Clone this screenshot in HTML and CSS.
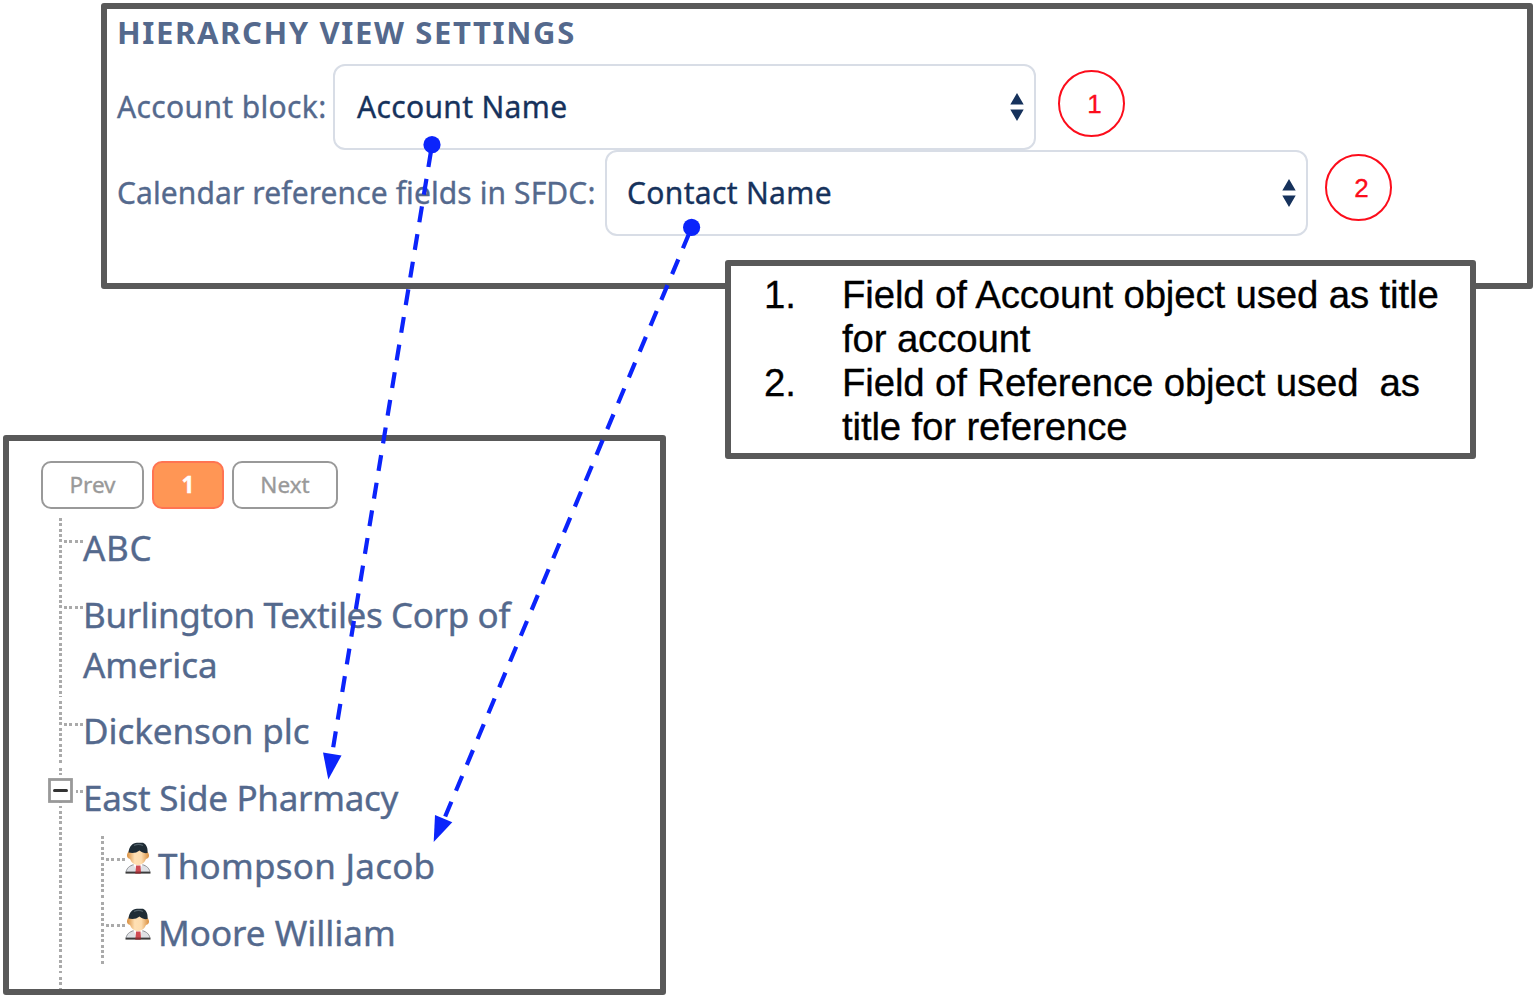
FILE: index.html
```html
<!DOCTYPE html>
<html lang="en">
<head>
<meta charset="utf-8">
<title>Hierarchy view settings</title>
<link rel="stylesheet" href="styles.css">
</head>
<body>
<main class="sheet">
  <section class="panel settings">
    <h1 class="heading">HIERARCHY VIEW SETTINGS</h1>
    <div class="field">
      <span class="label label-account">Account block:</span>
      <div class="select">
        <span class="value">Account Name</span>
        <svg class="sorter" width="14" height="28" viewBox="0 0 14 28"><path d="M7 0l6.7 11.500H.3zM7 28L.3 16.500h13.400z"/></svg>
      </div>
      <span class="badge badge-one">1</span>
    </div>
    <div class="field">
      <span class="label label-calendar">Calendar reference fields in SFDC:</span>
      <div class="select select-contact">
        <span class="value">Contact Name</span>
        <svg class="sorter" width="14" height="28" viewBox="0 0 14 28"><path d="M7 0l6.7 11.500H.3zM7 28L.3 16.500h13.400z"/></svg>
      </div>
      <span class="badge badge-two">2</span>
    </div>
  </section>

  <section class="panel hierarchy">
    <nav class="pager">
      <span class="page page-prev">Prev</span>
      <span class="page page-current">1</span>
      <span class="page page-next">Next</span>
    </nav>
    <ul class="tree">
      <li class="node"><span class="name name-wide">ABC</span></li>
      <li class="node"><span class="name"><span class="name-tight">Burlington Textiles Corp of</span><br>America</span></li>
      <li class="node"><span class="name name-plain">Dickenson plc</span></li>
      <li class="node node-open">
        <svg class="toggle" width="25" height="25" viewBox="0 0 25 25"><rect x="1.500" y="1.500" width="22" height="22" fill="#fff" stroke="#999" stroke-width="2.800"/><path d="M6.500 12.500h12" stroke="#333" stroke-width="3" stroke-linecap="round"/></svg>
        <span class="name name-snug">East Side Pharmacy</span>
        <ul class="branch">
          <li class="node leaf">
            <svg class="person" width="26" height="32" viewBox="0 0 26 32"><use href="#person"/></svg>
            <span class="name name-loose">Thompson Jacob</span>
          </li>
          <li class="node leaf">
            <svg class="person" width="26" height="32" viewBox="0 0 26 32"><use href="#person"/></svg>
            <span class="name">Moore William</span>
          </li>
        </ul>
      </li>
      <li class="node node-cut"></li>
    </ul>
  </section>

  <aside class="panel callout">
    <ol class="notes">
      <li class="note"><span class="num">1.</span><span>Field of Account object used as title<br>for account</span></li>
      <li class="note"><span class="num">2.</span><span>Field of Reference object used&nbsp; as<br>title for reference</span></li>
    </ol>
  </aside>

  <svg class="arrows" width="1536" height="998" viewBox="0 0 1536 998">
    <defs>
      <linearGradient id="skin" x1="0" x2="1"><stop offset="0" stop-color="#d98e3e"/><stop offset=".35" stop-color="#ffe0b4"/><stop offset=".65" stop-color="#fddcae"/><stop offset="1" stop-color="#d98e3e"/></linearGradient>
      <g id="person">
        <path d="M1 30C2 26 4 24 9 22.500h8c5 1.500 7 3.500 8 7.500z" fill="#dfe1e5" stroke="#8c8f94" stroke-width="1"/>
        <path d="M8 21.500h10l-3 6h-4z" fill="#fff"/>
        <path d="M11 23.500h4.500l.5 7h-5.500z" fill="#cf4a52"/>
        <path d="M.5 30.700h25" stroke="#3c3c3c" stroke-width="1.800"/>
        <path d="M10.300 30.700h5.400" stroke="#8f2a30" stroke-width="1.800"/>
        <path d="M2 13.500C2 10 6 6 13 6s11 4 11 7.500c0 2-1 3-3 3.500-1.500 3.500-4 6-8 6s-6.500-2.500-8-6c-2-.5-3-1.500-3-3.500z" fill="url(#skin)"/>
        <path d="M3.500 10.500C4 4.500 7.500.7 12 .7h6c3.500 1.500 5 5.500 4.500 10.300-2.500.5-5-.3-8-2.500-3 2.500-7 3-11 2z" fill="#1f2c35"/>
        <path d="M9 3.500c3-1.500 6-1.500 9 0" stroke="#52616b" stroke-width="1.200" fill="none"/>
      </g>
    </defs>
    <g fill="#0b24fb" stroke="none">
      <circle cx="432" cy="144.700" r="8.600"/>
      <path d="M323 752.500l18.500 3L328.300 779.500z"/>
      <circle cx="691.600" cy="227.300" r="8.600"/>
      <path d="M435 815l17.300 7.300L433.700 842z"/>
    </g>
    <g fill="none" stroke="#0b24fb" stroke-width="4.200" stroke-dasharray="16 12">
      <path d="M431 151.200L333 748.500"/>
      <path d="M689.100 233.500L445 817"/>
    </g>
  </svg>
</main>
</body>
</html>
```
FILE: styles.css
```css
* { box-sizing: border-box; }

body { margin: 0; background: #fff; font-family: "Noto Sans", "Open Sans", sans-serif; }

.sheet { position: relative; width: 1536px; height: 998px; overflow: hidden; padding-top: 3px; }

.panel { border: 6px solid #595959; border-radius: 3px; background: #fff; }

/* Settings form */
.settings { width: 1432px; height: 286px; margin-left: 101px; padding-left: 10px; color: #54698d; }

.heading { margin: 0; height: 55px; padding-top: 2px; font-size: 31px; line-height: 42px; font-weight: 700; letter-spacing: 1.620px; }

.field { display: flex; align-items: center; height: 86px; font-size: 30px; line-height: 40px; -webkit-text-stroke: .35px; }
.label { flex: none; padding-bottom: 1px; white-space: nowrap; }
.label-account { width: 216px; letter-spacing: .350px; }
.label-calendar { width: 488px; letter-spacing: .100px; }

.select {
  display: flex; align-items: center; justify-content: space-between; flex: none;
  width: 703px; height: 86px; padding: 0 10px 0 22px;
  border: 2px solid #d8dde6; border-radius: 12px; color: #16325c;
}
.select-contact { padding-left: 20px; }
.value { padding-bottom: 1px; letter-spacing: .330px; }
.sorter { fill: #16325c; }

.badge {
  flex: none; width: 67px; height: 67px; margin-left: 22px; padding-left: 6px;
  border: 2px solid #fc0d1b; border-radius: 50%; color: #fc0d1b; text-align: center;
  font: 26px/65px "Liberation Sans", Arial, sans-serif;
}
.badge-one { margin-bottom: 7px; }
.badge-two { margin-left: 17px; margin-bottom: 11px; }

/* Account tree */
.hierarchy { width: 663px; height: 560px; margin: 146px 0 0 3px; padding: 20px 0 0 32px; overflow: hidden; }

.pager { display: flex; gap: 8px; height: 57px; }
.page {
  height: 48px; border: 2px solid #999; border-radius: 10px; color: #999;
  font-size: 22.500px; line-height: 43px; text-align: center; -webkit-text-stroke: .35px;
}
.page-prev { width: 103px; }
.page-current { width: 72px; border-color: #ff7452; background: #ff9655; color: #fff; font-weight: 700; }
.page-next { width: 106px; }

.tree, .branch { margin: 0; padding: 0; list-style: none; }
.tree { padding-left: 18px; color: #54698d; font-size: 35px; line-height: 50.400px; -webkit-text-stroke: .4px; }

.node { position: relative; padding: 5.300px 0 10.700px 24px; }
.node::before {
  content: ""; position: absolute; left: 0; top: 0; bottom: 4px; width: 3px;
  background: repeating-linear-gradient(#aaa 0 3px, transparent 3px 5.330px);
}
.node::after {
  content: ""; position: absolute; left: 5px; top: 22px; width: 19px; height: 3px;
  background: repeating-linear-gradient(90deg, #aaa 0 3px, transparent 3px 5.330px);
}
.name { display: block; width: max-content; white-space: nowrap; }
.name-wide { letter-spacing: .700px; }
.name-tight { letter-spacing: -.370px; }
.name-plain { letter-spacing: -.080px; }
.name-snug { letter-spacing: -.280px; }
.name-loose { letter-spacing: .250px; }
.toggle { position: absolute; left: -11px; top: 10px; z-index: 1; outline: 3px solid #fff; }
.branch { padding: 12.700px 0 0 18px; }
.leaf { display: flex; }
.person { margin: .700px 7px 0 0; }
.node-open { padding-bottom: 8px; }
.node-cut { height: 20px; }
.node-cut::after { display: none; }

/* Legend overlapping the settings panel */
.callout { position: absolute; left: 725px; top: 260px; width: 751px; height: 199px; padding: 7px 0 0 33px; }
.notes { margin: 0; padding: 0; list-style: none; color: #000; font: 38.400px/44px "Liberation Sans", Arial, sans-serif; letter-spacing: -.140px; -webkit-text-stroke: .3px; }
.note { display: flex; white-space: nowrap; }
.num { width: 78px; flex: none; }

.arrows { position: absolute; left: 0; top: 0; pointer-events: none; }
```
